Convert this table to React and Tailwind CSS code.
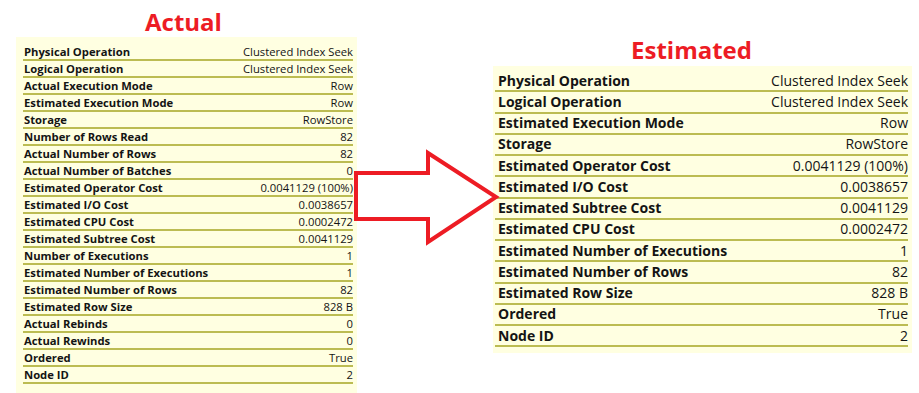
import React from 'react';

const actualRows = [
  ['Physical Operation', 'Clustered Index Seek'],
  ['Logical Operation', 'Clustered Index Seek'],
  ['Actual Execution Mode', 'Row'],
  ['Estimated Execution Mode', 'Row'],
  ['Storage', 'RowStore'],
  ['Number of Rows Read', '82'],
  ['Actual Number of Rows', '82'],
  ['Actual Number of Batches', '0'],
  ['Estimated Operator Cost', '0.0041129 (100%)'],
  ['Estimated I/O Cost', '0.0038657'],
  ['Estimated CPU Cost', '0.0002472'],
  ['Estimated Subtree Cost', '0.0041129'],
  ['Number of Executions', '1'],
  ['Estimated Number of Executions', '1'],
  ['Estimated Number of Rows', '82'],
  ['Estimated Row Size', '828 B'],
  ['Actual Rebinds', '0'],
  ['Actual Rewinds', '0'],
  ['Ordered', 'True'],
  ['Node ID', '2'],
];

const estimatedRows = [
  ['Physical Operation', 'Clustered Index Seek'],
  ['Logical Operation', 'Clustered Index Seek'],
  ['Estimated Execution Mode', 'Row'],
  ['Storage', 'RowStore'],
  ['Estimated Operator Cost', '0.0041129 (100%)'],
  ['Estimated I/O Cost', '0.0038657'],
  ['Estimated Subtree Cost', '0.0041129'],
  ['Estimated CPU Cost', '0.0002472'],
  ['Estimated Number of Executions', '1'],
  ['Estimated Number of Rows', '82'],
  ['Estimated Row Size', '828 B'],
  ['Ordered', 'True'],
  ['Node ID', '2'],
];

export default function App() {
  return (
    <div className="relative w-[919px] h-[393px] bg-white overflow-hidden font-['Open_Sans','Noto_Sans',sans-serif] text-[#141414]">
      <div className="flex items-start">
        {/* Actual plan tooltip */}
        <div className="ml-[16px] w-[341px] flex flex-col">
          <h1 className="h-[37px] pt-[8px] pr-[6px] text-center text-[24px] leading-[28px] font-bold text-[#ed1c24]">Actual</h1>
          <div className="bg-[#ffffe1] pt-[7px] pb-[12px] pl-[7px] pr-[4px]">
            {actualRows.map(([label, value]) => (
              <div key={label} className="h-[17px] flex items-center justify-between border-b-2 border-[#bcbc52] text-[11.25px] leading-none">
                <span className="font-bold pl-[1px]">{label}</span>
                <span>{value}</span>
              </div>
            ))}
          </div>
        </div>

        {/* Estimated plan tooltip */}
        <div className="ml-[136px] w-[419px] flex flex-col">
          <h1 className="h-[66px] pt-[36px] pr-[22px] text-center text-[24px] leading-[28px] font-bold text-[#ed1c24]">Estimated</h1>
          <div className="bg-[#ffffe1] pt-[5px] pb-[6px] pl-[2px] pr-[4px]">
            {estimatedRows.map(([label, value]) => (
              <div key={label} className="h-[21.25px] flex items-center justify-between border-b-2 border-[#bcbc52] text-[14px] leading-none">
                <span className="font-bold pl-[3px]">{label}</span>
                <span>{value}</span>
              </div>
            ))}
          </div>
        </div>
      </div>

      {/* arrow annotation */}
      <svg className="absolute left-0 top-0" width="919" height="393" viewBox="0 0 919 393">
        <polygon
          points="356,173 428,173 428,153 496,197 428,242 428,219 356,219"
          fill="white"
          stroke="#ed1c24"
          strokeWidth="4"
          strokeLinejoin="miter"
        />
      </svg>
    </div>
  );
}
